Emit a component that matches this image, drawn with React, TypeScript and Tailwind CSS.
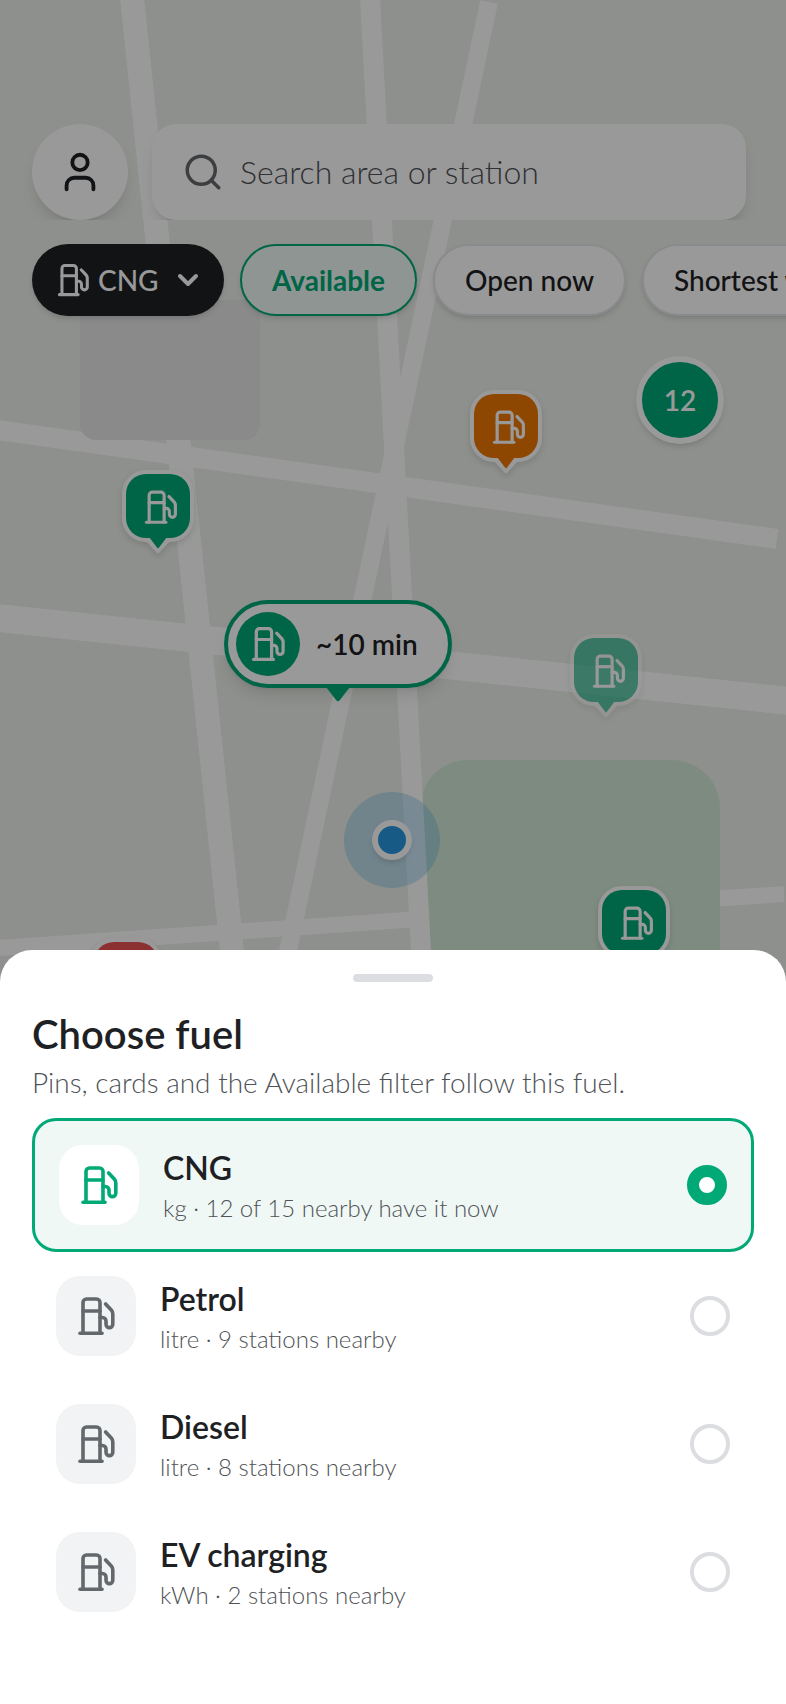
import { useState } from "react"
import { ChevronDown, Search, User } from "lucide-react"

const fuels = [
  { id: "cng", name: "CNG", detail: "kg · 12 of 15 nearby have it now" },
  { id: "petrol", name: "Petrol", detail: "litre · 9 stations nearby" },
  { id: "diesel", name: "Diesel", detail: "litre · 8 stations nearby" },
  { id: "ev", name: "EV charging", detail: "kWh · 2 stations nearby" },
]

const filters = [
  { label: "Available", active: true },
  { label: "Open now", active: false },
  { label: "Shortest wait", active: false },
]

function FuelPaths() {
  return (
    <g fill="none" stroke="currentColor" strokeWidth="3.6" strokeLinecap="round" strokeLinejoin="round">
      <path d="M7 37V6.500A3.500 3.500 0 0 1 10.500 3h10A3.500 3.500 0 0 1 24 6.500V37" />
      <path d="M4 37.200H26" />
      <path d="M7 15H24" />
      <path d="M24 21.500H26.500A3.500 3.500 0 0 1 30 25V28.200A3.400 3.400 0 0 0 36.800 28.200V18C36.800 16.400 36.400 15.200 35.300 14L29.600 8" />
    </g>
  )
}

function FuelIcon({ className }: { className: string }) {
  return (
    <svg viewBox="0 0 40 40" className={className} aria-hidden="true">
      <FuelPaths />
    </svg>
  )
}

// the marker's spot on the map is the centre of its square head
function Pin({ className, color }: { className: string; color: string }) {
  return (
    <svg
      width="72"
      height="84"
      viewBox="0 0 72 84"
      className={`absolute -translate-x-9 -translate-y-9 overflow-visible drop-shadow-md ${className}`}
      aria-hidden="true"
    >
      <rect width="72" height="72" rx="24" fill="#fff" />
      <path d="M24 71H48L38 82Q36 84.500 34 82Z" fill="#fff" />
      <rect x="4" y="4" width="64" height="64" rx="20" fill={color} />
      <path d="M27 67H45L37 77.500Q36 79 35 77.500Z" fill={color} />
      <g transform="translate(21 19.500) scale(.88)" className="text-white">
        <FuelPaths />
      </g>
    </svg>
  )
}

function MapCanvas() {
  return (
    <div className="absolute inset-0 bg-[#ebf0e9]">
      <svg className="absolute inset-0 h-full w-full" viewBox="0 0 786 1704" preserveAspectRatio="xMidYMin slice" aria-hidden="true">
        <g stroke="#fff" fill="none">
          <path d="M-2 430L777 539" strokeWidth="20" />
          <path d="M-2 618L790 701" strokeWidth="28" />
          <path d="M-2 948L784 894" strokeWidth="16" />
          <path d="M132 -2L234 970" strokeWidth="24" />
        </g>
        <rect x="80" y="300" width="180" height="140" rx="16" fill="#e6e6e6" />
        <rect x="420" y="760" width="300" height="240" rx="48" fill="#d3e8d5" />
        <g stroke="#fff" fill="none">
          <path d="M370 -2L422 970" strokeWidth="20" />
          <path d="M489 2L284 970" strokeWidth="18" />
        </g>
      </svg>

      <Pin className="left-[158px] top-[506px]" color="#00a976" />
      <Pin className="left-[506px] top-[426px]" color="#eb7700" />
      <Pin className="left-[606px] top-[670px] opacity-60" color="#00a976" />
      <Pin className="left-[634px] top-[922px]" color="#00a976" />
      <Pin className="left-[126px] top-[974px]" color="#e85252" />

      <div className="absolute left-[636px] top-[356px] flex size-[88px] items-center justify-center rounded-full border-6 border-white bg-[#00a976] text-[28px] font-semibold text-white shadow-md">
        12
      </div>

      <div className="absolute left-[344px] top-[792px] flex size-24 items-center justify-center rounded-full bg-[#339ee6]/25">
        <div className="size-10 rounded-full border-6 border-white bg-[#2796de] shadow-md" />
      </div>

      <div className="absolute left-[224px] top-[600px] flex h-[88px] w-[228px] items-center gap-4 rounded-full border-4 border-[#00a976] bg-white pl-2 shadow-lg">
        <span className="flex size-16 items-center justify-center rounded-full bg-[#00a976] text-white">
          <FuelIcon className="size-9" />
        </span>
        <span className="text-[28px] font-semibold text-[#1e2124]">~10 min</span>
        <svg className="absolute -bottom-[18px] left-[98px]" width="24" height="15" viewBox="0 0 24 15" aria-hidden="true">
          <path d="M0 0H24L13.500 13.500Q12 15 10.500 13.500Z" fill="#00a976" />
        </svg>
      </div>
    </div>
  )
}

function TopBar() {
  return (
    <header className="relative pt-[124px]">
      <div className="flex gap-6 overflow-hidden pl-8 pr-10">
        <button aria-label="Profile" className="flex size-24 shrink-0 items-center justify-center rounded-full bg-white text-[#1e2124] shadow-lg">
          <User size={46} strokeWidth={2} />
        </button>
        <label className="flex h-24 flex-1 items-center gap-4 rounded-3xl bg-white pl-[30px] text-[#64686c] shadow-lg">
          <Search size={42} strokeWidth={2} className="shrink-0" />
          <input
            type="search"
            aria-label="Search area or station"
            placeholder="Search area or station"
            className="w-full bg-transparent text-[32px] font-light outline-none placeholder:text-[#4f5357]"
          />
        </label>
      </div>
      <div className="mt-6 flex gap-4 overflow-hidden pb-4 pl-8 text-[28px] font-medium">
        <button className="flex h-18 w-48 shrink-0 items-center justify-between rounded-full bg-[#1e2124] pl-6 pr-5 text-white shadow-md">
          <span className="flex items-center gap-2">
            <FuelIcon className="size-[34px]" />
            CNG
          </span>
          <ChevronDown size={32} strokeWidth={3} />
        </button>
        {filters.map((filter) => (
          <button
            key={filter.label}
            className={`h-18 shrink-0 rounded-full border-2 px-[30px] shadow-md ${
              filter.active ? "border-[#00a976] bg-[#eff8f5] font-bold text-[#00a976]" : "border-[#e4e6e8] bg-white text-[#1e2124]"
            }`}
          >
            {filter.label}
          </button>
        ))}
      </div>
    </header>
  )
}

export default function App() {
  const [selected, setSelected] = useState("cng")

  return (
    <div className="relative flex min-h-screen flex-col overflow-hidden font-[Lato,sans-serif]">
      <MapCanvas />
      <TopBar />
      <div className="absolute inset-0 bg-black/40" />

      <section role="dialog" aria-labelledby="fuel-title" className="relative mt-auto rounded-t-4xl bg-white px-8 pb-[68px] pt-6">
        <div className="mx-auto h-2 w-20 rounded-full bg-[#dcdde0]" />
        <h2 id="fuel-title" className="mt-7 text-[40px] font-semibold leading-12 text-[#1e2124]">
          Choose fuel
        </h2>
        <p className="mt-1.5 text-[28px] font-light leading-9 text-[#4f5357]">Pins, cards and the Available filter follow this fuel.</p>
        <div className="mt-[18px]">
          {fuels.map((fuel) => {
            const active = fuel.id === selected
            return (
              <label
                key={fuel.id}
                className={`flex items-center gap-6 rounded-3xl p-6 ${active ? "border-3 border-[#00a976] bg-[#eff8f5]" : ""}`}
              >
                <span
                  className={`flex size-20 shrink-0 items-center justify-center rounded-3xl ${
                    active ? "bg-white text-[#00a976]" : "bg-[#f1f3f4] text-[#64686c]"
                  }`}
                >
                  <FuelIcon className="size-10" />
                </span>
                <span className="flex flex-1 flex-col gap-1 pt-0.5">
                  <span className="text-[32px] font-semibold leading-10 text-[#1e2124]">{fuel.name}</span>
                  <span className="text-2xl font-light leading-8 text-[#4f5357]">{fuel.detail}</span>
                </span>
                <input
                  type="radio"
                  name="fuel"
                  checked={active}
                  onChange={() => setSelected(fuel.id)}
                  className="size-10 shrink-0 appearance-none rounded-full border-4 border-[#dcdde0] bg-white checked:border-12 checked:border-[#00a976]"
                />
              </label>
            )
          })}
        </div>
      </section>
    </div>
  )
}
